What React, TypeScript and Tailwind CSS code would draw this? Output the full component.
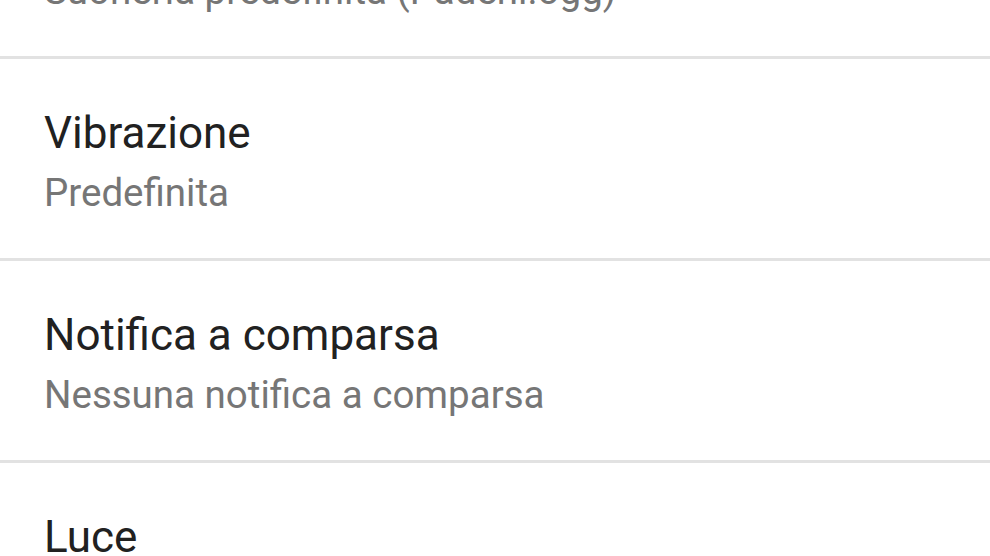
const rows = [
  { title: "Suono",               subtitle: "Suoneria predefinita (Padeni.ogg)" },
  { title: "Vibrazione",          subtitle: "Predefinita" },
  { title: "Notifica a comparsa", subtitle: "Nessuna notifica a comparsa" },
  { title: "Luce",                subtitle: "Predefinita" },
];

export default function App() {
  return (
    <div className="w-full h-[556px] overflow-hidden bg-white font-['Roboto',sans-serif]">
      <div className="-mt-[143px]">
        {rows.map((r) => (
          <div key={r.title} className="pl-[44px] pt-[48px] pb-[43px] border-b-[3px] border-[#e2e2e2]">
            <p className="text-[44px] leading-[52px] text-[#212121]">{r.title}</p>
            <p className="mt-[12px] text-[38.5px] leading-[44px] text-[#767676]">{r.subtitle}</p>
          </div>
        ))}
      </div>
    </div>
  );
}
